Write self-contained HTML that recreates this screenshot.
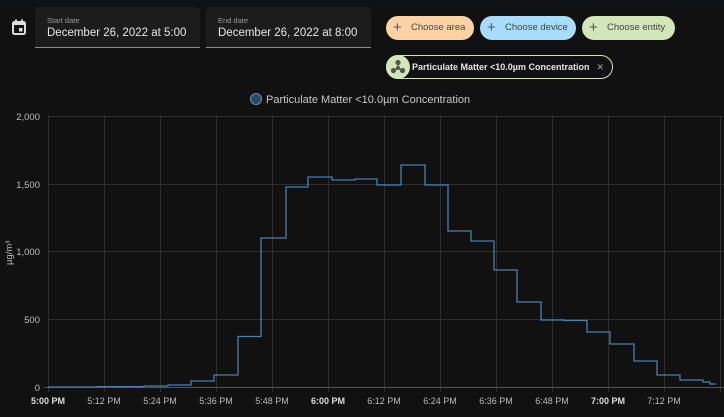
<!DOCTYPE html>
<html><head><meta charset="utf-8"><style>
*{margin:0;padding:0;box-sizing:border-box}
body{width:724px;height:417px;background:#111111;font-family:"Liberation Sans",sans-serif;position:relative;overflow:hidden;color:#e1e1e1}
.top{position:absolute;left:0;top:0;width:724px;height:3px;background:#0d1417}
.field{position:absolute;top:7px;height:41px;background:#1c1c1c;border-bottom:1px solid #8a8a8a;border-radius:4px 4px 0 0}
.field .l{position:absolute;left:12px;top:9px;font-size:7.5px;color:#9a9a9a}
.field .v{position:absolute;left:12px;top:20px;font-size:11.5px;color:#e6e6e6;white-space:nowrap;overflow:hidden;width:143px}
.chip{position:absolute;top:16px;height:24px;border-radius:12px;font-size:9.5px;color:#444;line-height:24px;padding-left:25px}
.chip:before{content:"+";position:absolute;left:7px;top:0;font-size:15px;color:#555}
.ent{position:absolute;left:386px;top:55px;width:227px;height:24px;border:1px solid #d2e6b8;border-radius:12px;font-size:9px;font-weight:bold;color:#e6e6e6;line-height:22px;padding-left:25px;white-space:nowrap}
.ent .ic{position:absolute;left:-1px;top:-1px;width:24px;height:24px;border-radius:12px;background:#d2e6b8}
.ent .x{position:absolute;right:8px;top:0;color:#aaa;font-weight:normal;font-size:9px}
svg text{font-family:"Liberation Sans",sans-serif}
</style></head><body>
<div class="top"></div>
<svg style="position:absolute;left:12px;top:19px" width="14" height="16" viewBox="0 0 14 16"><rect x="1" y="3" width="12" height="12" rx="1.5" fill="none" stroke="#ddd" stroke-width="2"/><rect x="1" y="3" width="12" height="3" fill="#ddd"/><rect x="3" y="0.5" width="2" height="3" fill="#ddd"/><rect x="9" y="0.5" width="2" height="3" fill="#ddd"/><rect x="7" y="9" width="3.5" height="3.5" fill="#ddd"/></svg>
<div class="field" style="left:35px;width:165px"><div class="l">Start date</div><div class="v">December 26, 2022 at 5:00 PM</div></div>
<div class="field" style="left:206px;width:165px"><div class="l">End date</div><div class="v">December 26, 2022 at 8:00 PM</div></div>
<div class="chip" style="left:386px;width:88px;background:#fdd3a6">Choose area</div>
<div class="chip" style="left:480px;width:96px;background:#a8dcfb">Choose device</div>
<div class="chip" style="left:582px;width:93px;background:#d2e6b8">Choose entity</div>
<div class="ent"><div class="ic"><svg width="24" height="24" viewBox="0 0 24 24"><g fill="#555" stroke="#555" stroke-width="1.2"><circle cx="12" cy="7.5" r="2"/><circle cx="7.5" cy="15.5" r="2"/><circle cx="16.5" cy="15.5" r="2"/><circle cx="12" cy="13" r="1.5"/><line x1="12" y1="7.5" x2="12" y2="13"/><line x1="7.5" y1="15.5" x2="12" y2="13"/><line x1="16.5" y1="15.5" x2="12" y2="13"/></g></svg></div>Particulate Matter &lt;10.0µm Concentration<span class="x">✕</span></div>
<svg style="position:absolute;left:0;top:0" width="724" height="417">
<circle cx="256" cy="99" r="5.5" fill="#2a4a6c" stroke="#6a8fb3" stroke-width="1"/>
<text x="266" y="103" font-size="11" fill="#c8c8c8">Particulate Matter &lt;10.0µm Concentration</text>
<g stroke="#2f2f2f" stroke-width="1">
<line x1="48" y1="116.5" x2="724" y2="116.5"/><line x1="48" y1="184.5" x2="724" y2="184.5"/><line x1="48" y1="251.5" x2="724" y2="251.5"/><line x1="48" y1="319.5" x2="724" y2="319.5"/>
<line x1="48.5" y1="116" x2="48.5" y2="392"/><line x1="104.5" y1="116" x2="104.5" y2="392"/><line x1="160.5" y1="116" x2="160.5" y2="392"/><line x1="216.5" y1="116" x2="216.5" y2="392"/><line x1="272.5" y1="116" x2="272.5" y2="392"/><line x1="328.5" y1="116" x2="328.5" y2="392"/><line x1="384.5" y1="116" x2="384.5" y2="392"/><line x1="440.5" y1="116" x2="440.5" y2="392"/><line x1="496.5" y1="116" x2="496.5" y2="392"/><line x1="552.5" y1="116" x2="552.5" y2="392"/><line x1="608.5" y1="116" x2="608.5" y2="392"/><line x1="664.5" y1="116" x2="664.5" y2="392"/><line x1="720.5" y1="116" x2="720.5" y2="392"/>
</g>
<line x1="44" y1="387.5" x2="724" y2="387.5" stroke="#555"/>
<g font-size="9.5" fill="#bbb" text-anchor="end"><text x="40" y="120">2,000</text><text x="40" y="188">1,500</text><text x="40" y="255">1,000</text><text x="40" y="323">500</text><text x="40" y="391">0</text></g>
<text x="0" y="0" font-size="9.5" fill="#bbb" transform="translate(12,265) rotate(-90)">µg/m³</text>
<g font-size="9" fill="#bbb" text-anchor="middle"><text x="48" y="404" font-weight="bold" fill="#ddd">5:00 PM</text><text x="104" y="404">5:12 PM</text><text x="160" y="404">5:24 PM</text><text x="216" y="404">5:36 PM</text><text x="272" y="404">5:48 PM</text><text x="328" y="404" font-weight="bold" fill="#ddd">6:00 PM</text><text x="384" y="404">6:12 PM</text><text x="440" y="404">6:24 PM</text><text x="496" y="404">6:36 PM</text><text x="552" y="404">6:48 PM</text><text x="608" y="404" font-weight="bold" fill="#ddd">7:00 PM</text><text x="664" y="404">7:12 PM</text></g>
<path fill="none" stroke="#4a80b0" stroke-width="1.3" d="M48,387 H98 V386.6 H144 V386 H168 V385 H191 V381 H214 V375 H238 V336.5 H261 V238 H286 V187 H308 V177 H332 V180 H355 V179 H377 V185 H401 V165 H425 V185 H448 V231 H471 V241 H494 V270 H517 V302 H541 V320 H564 V320.5 H587 V332 H610 V344 H634 V361 H657 V375 H680 V380 H703 V382 H710 V384 H716"/>
</svg>
</body></html>
